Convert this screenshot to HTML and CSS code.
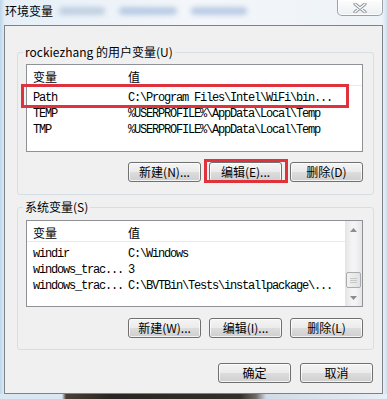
FILE: index.html
```html
<!DOCTYPE html>
<html lang="zh-CN">
<head>
<meta charset="utf-8">
<title>环境变量</title>
<link rel="stylesheet" href="styles.css">
</head>
<body>
<div class="window">
  <div class="titlebar">
    <span class="title">环境变量</span>
    <span class="haze"><i class="h1"></i><i class="h2"></i><i class="h3"></i></span>
    <button class="close" type="button" aria-label="关闭">
      <svg width="14" height="10" viewBox="0 0 14 10">
        <path d="M2 1 L12 9 M12 1 L2 9" stroke="#8a9098" stroke-width="3.2" stroke-linecap="round" fill="none"/>
        <path d="M2 1 L12 9 M12 1 L2 9" stroke="#ffffff" stroke-width="1.4" stroke-linecap="round" fill="none"/>
      </svg>
    </button>
  </div>

  <div class="panel">
    <fieldset class="group g-user">
      <legend>rockiezhang 的用户变量(U)</legend>
      <div class="list">
        <div class="list-main">
          <div class="header"><span class="c1">变量</span><span class="c2">值</span></div>
          <div class="rows">
            <div class="row hl"><span class="c1">Path</span><span class="c2">C:\Program Files\Intel\WiFi\bin...</span><span class="mark"></span></div>
            <div class="row"><span class="c1">TEMP</span><span class="c2">%USERPROFILE%\AppData\Local\Temp</span></div>
            <div class="row"><span class="c1">TMP</span><span class="c2">%USERPROFILE%\AppData\Local\Temp</span></div>
          </div>
        </div>
      </div>
      <div class="btns">
        <button class="btn" type="button">新建(N)...</button>
        <button class="btn marked" type="button">编辑(E)...<span class="mark"></span></button>
        <button class="btn" type="button">删除(D)</button>
      </div>
    </fieldset>

    <fieldset class="group g-sys">
      <legend>系统变量(S)</legend>
      <div class="list list-sys">
        <div class="list-main">
          <div class="header"><span class="c1">变量</span><span class="c2">值</span></div>
          <div class="rows">
            <div class="row"><span class="c1">windir</span><span class="c2">C:\Windows</span></div>
            <div class="row"><span class="c1">windows_trac...</span><span class="c2">3</span></div>
            <div class="row"><span class="c1">windows_trac...</span><span class="c2">C:\BVTBin\Tests\installpackage\...</span></div>
          </div>
        </div>
        <div class="scrollbar">
          <div class="arrow"><svg width="7" height="4" viewBox="0 0 7 4"><path d="M0 4 L3.5 0 L7 4 Z" fill="#8c8c8c"/></svg></div>
          <div class="track"><div class="thumb"><i></i><i></i><i></i></div></div>
          <div class="arrow"><svg width="7" height="4" viewBox="0 0 7 4"><path d="M0 0 L3.5 4 L7 0 Z" fill="#8c8c8c"/></svg></div>
        </div>
      </div>
      <div class="btns">
        <button class="btn" type="button">新建(W)...</button>
        <button class="btn" type="button">编辑(I)...</button>
        <button class="btn" type="button">删除(L)</button>
      </div>
    </fieldset>

    <div class="btns dialog-btns">
      <button class="btn" type="button">确定</button>
      <button class="btn" type="button">取消</button>
    </div>
  </div>
  <div class="foot"></div>
</div>
</body>
</html>
```

FILE: styles.css
```css
* { box-sizing: border-box; }
html, body { margin: 0; padding: 0; }
body {
  width: 387px;
  height: 399px;
  overflow: hidden;
  font-family: "Noto Sans CJK SC", "Noto Sans", sans-serif;
  font-size: 12px;
  color: #000;
  background: linear-gradient(90deg, #bcd6ea 0, #e6eff7 5px, #f3f6fa 50%, #eef3f8 382px, #d2e2f0 387px);
}
.window { display: flex; flex-direction: column; height: 399px; }

/* title bar */
.titlebar { height: 25px; flex: none; display: flex; align-items: flex-start; }
.title { margin: 4px 0 0 5px; line-height: 14px; }
.haze { display: flex; gap: 14px; margin: 7px 0 0 6px; filter: blur(2.5px); }
.haze i { display: block; height: 8px; border-radius: 4px; background: #8eaad4; opacity: .55; }
.haze .h1 { width: 46px; background: #9fb4cf; }
.haze .h2 { width: 58px; }
.haze .h3 { width: 56px; }
.close {
  margin: 0 4px 0 auto;
  width: 46px;
  height: 16px;
  padding: 0;
  border: 1px solid #9ca1a8;
  border-top: none;
  border-radius: 0 0 5px 5px;
  background: linear-gradient(#fdfdfd, #eceff2);
  box-shadow: inset 0 0 0 1px rgba(255,255,255,.8);
  display: flex;
  align-items: center;
  justify-content: center;
}

/* client panel */
.panel {
  height: 369px;
  flex: none;
  margin: 0 4px 0 4px;
  border: 1px solid #7d8288;
  background: #f0f0f0;
  padding: 0 8px 10px 12px;
}
.foot {
  flex: 1;
  background: linear-gradient(90deg, #d9e7f3 0, #d9e7f3 62px, #4a3e36 66px, #2a2522 110px, #342e2a 240px, #6e6a66 256px, #cfdbe6 266px, #e6eef6 100%);
}

/* group boxes */
.group {
  margin: 0;
  padding: 5px 10px 12px 8px;
  border: 1px solid #d5dfe5;
  border-radius: 3px;
  min-width: 0;
}
.group legend {
  padding: 0 2px;
  margin-left: -3px;
  line-height: 14px;
}
.g-user { margin-top: 19px; }
.g-sys { margin-top: 5px; padding-top: 6px; padding-bottom: 11px; }

/* list views */
.list {
  height: 88px;
  border: 1px solid #8e9297;
  background: #fff;
  display: flex;
}
.list-sys { height: 87px; }
.list-main { flex: 1; min-width: 0; }
.header {
  height: 21px;
  padding-top: 5px;
  line-height: 14px;
  border-bottom: 1px solid #e6eaee;
  display: flex;
}
.c1 { width: 101px; padding-left: 6px; flex: none; white-space: nowrap; }
.c2 { flex: 1; white-space: nowrap; }
.rows { padding-top: 4px; }
.row {
  height: 16px;
  line-height: 16px;
  display: flex;
  position: relative;
  font-family: "Liberation Mono", "DejaVu Sans Mono", monospace;
  font-size: 12px;
  letter-spacing: -1.2px;
}

/* red highlight marks */
.mark {
  position: absolute;
  border: 3px solid #e0323c;
  pointer-events: none;
}
.row .mark { top: -6px; bottom: -2px; left: -6px; right: 13px; }
.btn .mark { top: -4px; bottom: -2px; left: -6px; right: -7px; }

/* scrollbar */
.scrollbar {
  width: 17px;
  flex: none;
  display: flex;
  flex-direction: column;
  background: linear-gradient(90deg, #e4e4e4, #f4f4f4 40%, #f4f4f4 60%, #e6e6e6);
}
.arrow { height: 17px; display: flex; align-items: center; justify-content: center; }
.track { flex: 1; display: flex; flex-direction: column; justify-content: flex-end; padding: 0 1px 1px 1px; }
.thumb {
  height: 16px;
  border: 1px solid #a9abae;
  border-radius: 2px;
  background: linear-gradient(90deg, #f2f2f2, #e2e2e2);
  display: flex;
  flex-direction: column;
  align-items: center;
  justify-content: center;
  gap: 1px;
}
.thumb i { display: block; width: 7px; height: 1px; background: #c8c8c8; }

/* buttons */
.btns { display: flex; justify-content: flex-end; gap: 8px; margin-top: 10px; }
.g-sys .btns { margin-top: 11px; }
.btn {
  position: relative;
  width: 73px;
  height: 20px;
  padding: 0;
  border: 1px solid #707070;
  border-radius: 3px;
  background: linear-gradient(#f4f4f4 0, #ebebeb 50%, #dddddd 50%, #cfcfcf 100%);
  box-shadow: inset 0 0 0 1px rgba(255,255,255,.75);
  font-family: "Noto Sans CJK SC", "Noto Sans", sans-serif;
  font-size: 12px;
  line-height: 18px;
  color: #000;
  text-align: center;
}
.dialog-btns { margin-top: 13px; gap: 9px; margin-right: 1px; }
```
